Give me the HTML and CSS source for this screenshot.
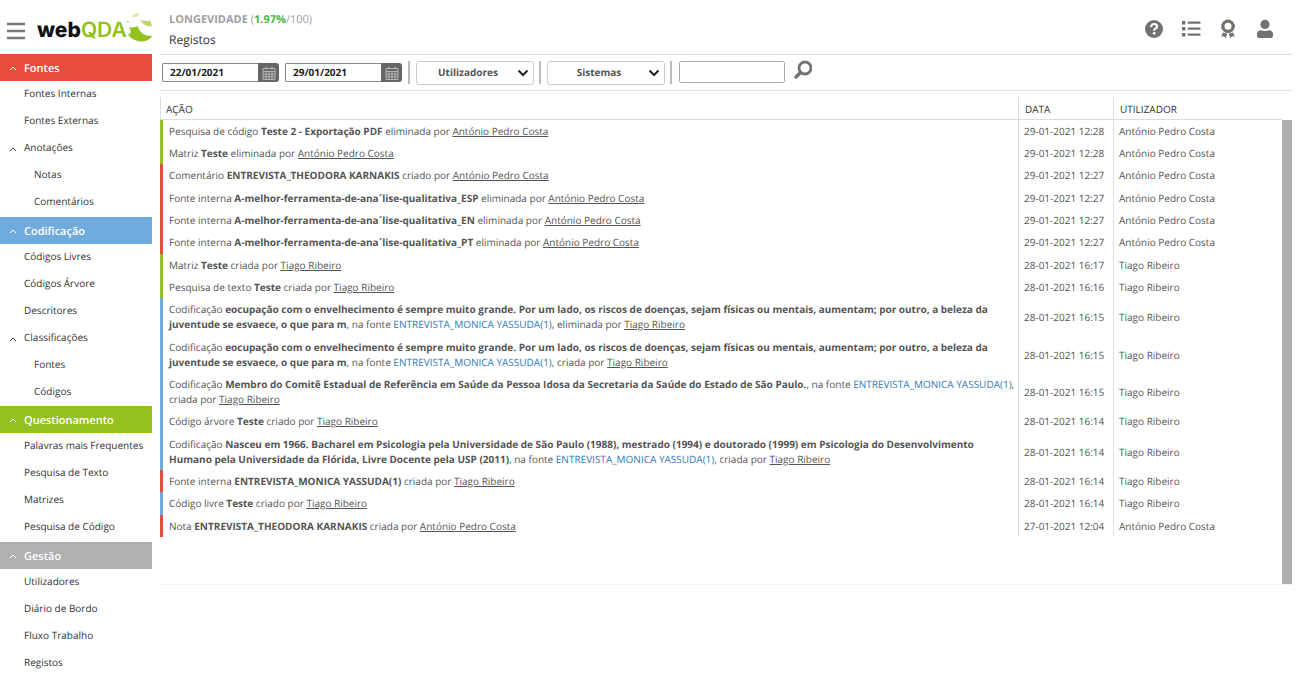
FILE: index.html
```html
<!DOCTYPE html>
<html lang="pt">
<head>
<meta charset="utf-8">
<title>webQDA - Registos</title>
<link rel="stylesheet" href="styles.css">
</head>
<body>
<div class="app">
  <aside class="sidebar">
    <div class="brand">
      <button class="icon-button" type="button" aria-label="Menu">
        <svg width="18" height="18" viewBox="0 0 18 18"><path d="M0 2h18M0 9h18M0 16h18" stroke="#777772" stroke-width="2.6"/></svg>
      </button>
      <a class="logo" href="#"><span class="logo-web">web</span><span class="logo-qda">QDA</span></a>
      <svg class="logo-leaf" width="27" height="32" viewBox="0 0 27 32">
        <path d="M5 5.500Q6 2.500 13 1.500Q12 6 5 6.500Z" fill="#dbe9a9"/>
        <path d="M13 8.500Q19 11 23.500 9.500L25 15.500Q17 16 13 8.500Z" fill="#bcd766"/>
        <path d="M2 16.500Q7 17 10.500 15Q13 25 25.500 25Q21 31 13 30.500Q4 29 1 23.500Q6 22 2 16.500Z" fill="#95c11f"/>
        <circle cx="1" cy="11" r="1" fill="#bcd766"/>
      </svg>
    </div>
    <nav class="menu">
      <a class="section red" href="#"><svg class="caret" viewBox="0 0 8 5"><path d="M1 4l3-3 3 3"/></svg>Fontes</a>
      <a class="item" href="#">Fontes Internas</a>
      <a class="item" href="#">Fontes Externas</a>
      <a class="item" href="#"><svg class="caret" viewBox="0 0 8 5"><path d="M1 4l3-3 3 3"/></svg>Anotações</a>
      <a class="item sub" href="#">Notas</a>
      <a class="item sub" href="#">Comentários</a>
      <a class="section blue" href="#"><svg class="caret" viewBox="0 0 8 5"><path d="M1 4l3-3 3 3"/></svg>Codificação</a>
      <a class="item" href="#">Códigos Livres</a>
      <a class="item" href="#">Códigos Árvore</a>
      <a class="item" href="#">Descritores</a>
      <a class="item" href="#"><svg class="caret" viewBox="0 0 8 5"><path d="M1 4l3-3 3 3"/></svg>Classificações</a>
      <a class="item sub" href="#">Fontes</a>
      <a class="item sub" href="#">Códigos</a>
      <a class="section green" href="#"><svg class="caret" viewBox="0 0 8 5"><path d="M1 4l3-3 3 3"/></svg>Questionamento</a>
      <a class="item" href="#">Palavras mais Frequentes</a>
      <a class="item" href="#">Pesquisa de Texto</a>
      <a class="item" href="#">Matrizes</a>
      <a class="item" href="#">Pesquisa de Código</a>
      <a class="section grey" href="#"><svg class="caret" viewBox="0 0 8 5"><path d="M1 4l3-3 3 3"/></svg>Gestão</a>
      <a class="item" href="#">Utilizadores</a>
      <a class="item" href="#">Diário de Bordo</a>
      <a class="item" href="#">Fluxo Trabalho</a>
      <a class="item" href="#">Registos</a>
    </nav>
  </aside>
  <main class="main">
    <header class="header">
      <div class="titles">
        <div class="project"><b>LONGEVIDADE</b> (<b class="usage">1.97%</b>/100)</div>
        <h1 class="page-title">Registos</h1>
      </div>
      <div class="tools">
        <button class="icon-button" type="button" aria-label="Ajuda">
          <svg width="20" height="20" viewBox="0 0 20 20"><circle cx="10" cy="10" r="9" fill="#73736e"/><path d="M7 8Q7.500 5 10.200 5Q13 5 13 7.400Q13 9 11.300 9.800Q10.200 10.300 10.200 11.700" fill="none" stroke="#fff" stroke-width="2.200"/><circle cx="10.200" cy="14.300" r="1.400" fill="#fff"/></svg>
        </button>
        <button class="icon-button" type="button" aria-label="Lista">
          <svg width="20" height="20" viewBox="0 0 20 20" fill="#73736e"><path d="M1 2h3.400v3.400H1zM1 8h3.400v3.400H1zM1 14h3.400v3.400H1zM6.800 2.600h12.700v2.200H6.800zM6.800 8.600h12.700v2.200H6.800zM6.800 14.600h12.700v2.200H6.800z"/></svg>
        </button>
        <button class="icon-button" type="button" aria-label="Certificado">
          <svg width="20" height="20" viewBox="0 0 20 20"><circle cx="10" cy="7.300" r="5" fill="none" stroke="#73736e" stroke-width="3"/><circle cx="10" cy="7.300" r="6.400" fill="none" stroke="#73736e" stroke-width="1" stroke-dasharray="2.300 1.050"/><path d="M5 13.500L9.300 14.800 7.500 19.200 6 17.300 3.200 17.600ZM15 13.500L10.700 14.800 12.500 19.200 14 17.300 16.800 17.600Z" fill="#73736e"/></svg>
        </button>
        <button class="icon-button" type="button" aria-label="Conta">
          <svg width="20" height="20" viewBox="0 0 20 20" fill="#73736e"><circle cx="10" cy="5.400" r="4.600"/><path d="M2 17V15.500Q2 11.300 6.200 11.300Q10 12.700 13.800 11.300Q18 11.300 18 15.500V17Q18 19 16 19H4Q2 19 2 17Z"/></svg>
        </button>
      </div>
    </header>
    <form class="filters">
      <div class="date">
        <input class="date-input" type="text" aria-label="Data inicial" value="22/01/2021">
        <button class="date-button" type="button" aria-label="Abrir calendário"><svg width="14" height="14" viewBox="0 0 14 14" fill="none" stroke="#b4b4b4"><path d="M1 2.500h12v11H1zM1 5.500h12M4 5.500v8M7 5.500v8M10 5.500v8M1 8.200h12M1 10.800h12M4 .5v3M10 .5v3"/></svg></button>
      </div>
      <div class="date">
        <input class="date-input" type="text" aria-label="Data final" value="29/01/2021">
        <button class="date-button" type="button" aria-label="Abrir calendário"><svg width="14" height="14" viewBox="0 0 14 14" fill="none" stroke="#b4b4b4"><path d="M1 2.500h12v11H1zM1 5.500h12M4 5.500v8M7 5.500v8M10 5.500v8M1 8.200h12M1 10.800h12M4 .5v3M10 .5v3"/></svg></button>
      </div>
      <span class="divider"></span>
      <div class="picker">
        <select class="picker-select" aria-label="Utilizadores"><option>Utilizadores</option></select>
        <svg class="picker-arrow" viewBox="0 0 12 8"><path d="M1.500 1.500L6 6l4.500-4.500"/></svg>
      </div>
      <span class="divider"></span>
      <div class="picker">
        <select class="picker-select" aria-label="Sistemas"><option>Sistemas</option></select>
        <svg class="picker-arrow" viewBox="0 0 12 8"><path d="M1.500 1.500L6 6l4.500-4.500"/></svg>
      </div>
      <span class="divider"></span>
      <input class="search" type="text" aria-label="Pesquisar">
      <button class="icon-button" type="submit" aria-label="Pesquisar">
        <svg width="20" height="26" viewBox="0 0 20 26" fill="none" stroke="#73736e"><circle cx="13" cy="8" r="6" stroke-width="2.800"/><path d="M8.500 12.500L4 17" stroke-width="3.400" stroke-linecap="round"/></svg>
      </button>
    </form>
    <section class="panel">
      <div class="log-wrap">
        <table class="log">
          <thead>
            <tr><th>AÇÃO</th><th class="col-date">DATA</th><th class="col-user">UTILIZADOR</th></tr>
          </thead>
          <tbody>
            <tr class="green-row"><td>Pesquisa de código <b>Teste 2 - Exportação PDF</b> eliminada por <a href="#">António Pedro Costa</a></td><td>29-01-2021 12:28</td><td>António Pedro Costa</td></tr>
            <tr class="green-row"><td>Matriz <b>Teste</b> eliminada por <a href="#">António Pedro Costa</a></td><td>29-01-2021 12:28</td><td>António Pedro Costa</td></tr>
            <tr class="red-row"><td>Comentário <b>ENTREVISTA_THEODORA KARNAKIS</b> criado por <a href="#">António Pedro Costa</a></td><td>29-01-2021 12:27</td><td>António Pedro Costa</td></tr>
            <tr class="red-row"><td>Fonte interna <b>A-melhor-ferramenta-de-ana´lise-qualitativa_ESP</b> eliminada por <a href="#">António Pedro Costa</a></td><td>29-01-2021 12:27</td><td>António Pedro Costa</td></tr>
            <tr class="red-row"><td>Fonte interna <b>A-melhor-ferramenta-de-ana´lise-qualitativa_EN</b> eliminada por <a href="#">António Pedro Costa</a></td><td>29-01-2021 12:27</td><td>António Pedro Costa</td></tr>
            <tr class="red-row"><td>Fonte interna <b>A-melhor-ferramenta-de-ana´lise-qualitativa_PT</b> eliminada por <a href="#">António Pedro Costa</a></td><td>29-01-2021 12:27</td><td>António Pedro Costa</td></tr>
            <tr class="green-row"><td>Matriz <b>Teste</b> criada por <a href="#">Tiago Ribeiro</a></td><td>28-01-2021 16:17</td><td>Tiago Ribeiro</td></tr>
            <tr class="green-row"><td>Pesquisa de texto <b>Teste</b> criada por <a href="#">Tiago Ribeiro</a></td><td>28-01-2021 16:16</td><td>Tiago Ribeiro</td></tr>
            <tr class="blue-row"><td>Codificação <b>eocupação com o envelhecimento é sempre muito grande. Por um lado, os riscos de doenças, sejam físicas ou mentais, aumentam; por outro, a beleza da juventude se esvaece, o que para m</b>, na fonte <a class="source" href="#">ENTREVISTA_MONICA YASSUDA(1)</a>, eliminada por <a href="#">Tiago Ribeiro</a></td><td>28-01-2021 16:15</td><td>Tiago Ribeiro</td></tr>
            <tr class="blue-row"><td>Codificação <b>eocupação com o envelhecimento é sempre muito grande. Por um lado, os riscos de doenças, sejam físicas ou mentais, aumentam; por outro, a beleza da juventude se esvaece, o que para m</b>, na fonte <a class="source" href="#">ENTREVISTA_MONICA YASSUDA(1)</a>, criada por <a href="#">Tiago Ribeiro</a></td><td>28-01-2021 16:15</td><td>Tiago Ribeiro</td></tr>
            <tr class="blue-row"><td>Codificação <b>Membro do Comitê Estadual de Referência em Saúde da Pessoa Idosa da Secretaria da Saúde do Estado de São Paulo.</b>, na fonte <a class="source" href="#">ENTREVISTA_MONICA YASSUDA(1)</a>, criada por <a href="#">Tiago Ribeiro</a></td><td>28-01-2021 16:15</td><td>Tiago Ribeiro</td></tr>
            <tr class="blue-row"><td>Código árvore <b>Teste</b> criado por <a href="#">Tiago Ribeiro</a></td><td>28-01-2021 16:14</td><td>Tiago Ribeiro</td></tr>
            <tr class="blue-row"><td>Codificação <b>Nasceu em 1966. Bacharel em Psicologia pela Universidade de São Paulo (1988), mestrado (1994) e doutorado (1999) em Psicologia do Desenvolvimento Humano pela Universidade da Flórida, Livre Docente pela USP (2011)</b>, na fonte <a class="source" href="#">ENTREVISTA_MONICA YASSUDA(1)</a>, criada por <a href="#">Tiago Ribeiro</a></td><td>28-01-2021 16:14</td><td>Tiago Ribeiro</td></tr>
            <tr class="red-row"><td>Fonte interna <b>ENTREVISTA_MONICA YASSUDA(1)</b> criada por <a href="#">Tiago Ribeiro</a></td><td>28-01-2021 16:14</td><td>Tiago Ribeiro</td></tr>
            <tr class="blue-row"><td>Código livre <b>Teste</b> criado por <a href="#">Tiago Ribeiro</a></td><td>28-01-2021 16:14</td><td>Tiago Ribeiro</td></tr>
            <tr class="red-row"><td>Nota <b>ENTREVISTA_THEODORA KARNAKIS</b> criada por <a href="#">António Pedro Costa</a></td><td>27-01-2021 12:04</td><td>António Pedro Costa</td></tr>
          </tbody>
        </table>
      </div>
      <div class="scrollbar"></div>
    </section>
  </main>
</div>
</body>
</html>
```
FILE: styles.css
```css
* { box-sizing: border-box; }

body {
  margin: 0;
  background: #fff;
  color: #555;
  font: 10px/15px "Open Sans", sans-serif;
  text-rendering: geometricPrecision;
}

a { color: inherit; }
input, select, button { font: inherit; color: inherit; text-rendering: inherit; }

.app {
  display: grid;
  grid-template-columns: 152px minmax(0, 1fr);
  column-gap: 8px;
  height: 100vh;
  padding-right: 7px;
  overflow: hidden;
}

.icon-button {
  display: flex;
  padding: 0;
  border: 0;
  background: none;
}

/* Sidebar */
.brand {
  display: flex;
  align-items: center;
  height: 54px;
  padding: 7px 0 0 7px;
}

.logo {
  margin-left: 12px;
  font: 800 21px/28px Inter, sans-serif;
  text-decoration: none;
}
.logo-web { color: #111; }
.logo-qda { color: #95c11f; font-weight: 600; }
.logo-leaf { flex: none; margin-bottom: 7px; }

.section, .item {
  position: relative;
  display: block;
  height: 27px;
  padding-left: 24px;
  text-decoration: none;
  white-space: nowrap;
}
.section { color: #fff; font-size: 11px; font-weight: 600; line-height: 29px; }
.item { color: #333; line-height: 25px; }
.sub { padding-left: 34px; }

.caret {
  position: absolute;
  left: 9px;
  top: 12px;
  width: 8px;
  height: 5px;
  fill: none;
  stroke: currentColor;
}

.red { background: #e84c3d; }
.blue { background: #70abde; }
.green { background: #95c11f; }
.grey { background: #b0b0b0; }
.blue, .grey { margin-top: 1px; }

/* Main */
.main {
  display: flex;
  flex-direction: column;
  min-width: 0;
}

.header {
  display: flex;
  justify-content: space-between;
  align-items: center;
  height: 55px;
  padding: 4px 17px 0 9px;
  border-bottom: 1px solid #ddd;
}
.titles { padding-top: 1px; }
.project { color: #a0a0a0; font-size: 11px; line-height: 20px; }
.usage { color: #4cb748; }
.page-title {
  margin: 0;
  color: #333;
  font-size: 12px;
  font-weight: 400;
  line-height: 20px;
}
.tools { display: flex; gap: 17px; }

.filters {
  display: flex;
  align-items: center;
  gap: 5px;
  height: 36px;
  padding-left: 2px;
  border-bottom: 1px solid #e2e2e2;
}

.date { display: flex; width: 117px; height: 19px; margin-right: 1px; }
.date-input {
  flex: 1;
  min-width: 0;
  padding: 0 7px;
  border: 1px solid #888;
  border-right: 0;
  border-radius: 2px 0 0 2px;
  color: #222;
  font-weight: 700;
}
.date-button {
  display: flex;
  align-items: center;
  justify-content: center;
  width: 21px;
  padding: 0;
  border: 0;
  border-radius: 0 3px 3px 0;
  background: #666;
}

.divider { width: 2px; height: 23px; background: #bbb; }

.picker { position: relative; width: 118px; margin-left: 1px; }
.picker-select {
  display: block;
  width: 100%;
  height: 24px;
  padding: 0 14px 0 0;
  border: 1px solid #ccc;
  border-radius: 3px;
  background: #fff;
  appearance: none;
  font-weight: 700;
  text-align-last: center;
}
.picker-arrow {
  position: absolute;
  right: 5px;
  top: 8px;
  width: 12px;
  height: 8px;
  fill: none;
  stroke: #222;
  stroke-width: 2;
  pointer-events: none;
}

.search {
  width: 106px;
  height: 22px;
  margin: 0 2px 2px;
  border: 1px solid #aaa;
  border-radius: 2px;
}

.panel {
  display: flex;
  flex: 1;
  margin: 6px 0 92px;
  border-bottom: 1px solid #f2f2f2;
}
.log-wrap { flex: 1; min-width: 0; }
.scrollbar { width: 10px; margin-top: 23px; background: #b0b0b0; }

.log {
  width: 100%;
  table-layout: fixed;
  border-collapse: separate;
  border-spacing: 0;
}
.log th {
  height: 23px;
  padding: 2px 6px 0;
  border-bottom: 1px solid #ddd;
  border-left: 1px solid #ddd;
  color: #333;
  font-weight: 400;
  text-align: left;
}
.log th:first-child { padding-left: 5px; }
.col-date { width: 95px; }
.col-user { width: 169px; }
.log td {
  padding: 4px 0 3px 5px;
  border-left: 1px solid #e0e0e0;
}
.log tr:nth-child(3n) td { padding-bottom: 4px; }
.log td:first-child {
  padding-left: 6px;
  padding-right: 0;
  border-left-width: 3px;
}
.log b { font-weight: 700; }
.log .source { color: #337ab7; text-decoration: none; }
.log .green-row td:first-child { border-left-color: #95c11f; }
.log .red-row td:first-child { border-left-color: #e84c3d; }
.log .blue-row td:first-child { border-left-color: #70abde; }
```
